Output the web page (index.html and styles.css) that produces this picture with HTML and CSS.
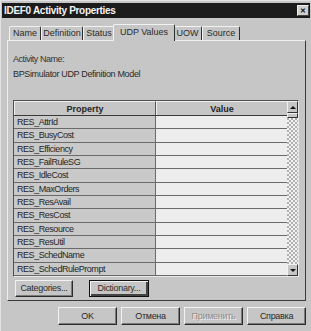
FILE: index.html
```html
<!DOCTYPE html>
<html>
<head>
<meta charset="utf-8">
<link rel="stylesheet" href="styles.css">
</head>
<body>
<div class="dialog">
  <div class="titlebar">
    <span class="title">IDEF0 Activity Properties</span>
    <span class="close">✕</span>
  </div>
  <div class="tabs">
    <div class="tab t-name">Name</div>
    <div class="tab t-def">Definition</div>
    <div class="tab t-status">Status</div>
    <div class="tab t-udp active">UDP Values</div>
    <div class="tab t-uow">UOW</div>
    <div class="tab t-src">Source</div>
  </div>
  <div class="panel">
    <div class="label">Activity Name:</div>
    <div class="name">BPSimulator UDP Definition Model</div>
    <div class="grid">
      <div class="table">
        <div class="row head"><div class="cell prop">Property</div><div class="cell val">Value</div></div>
        <div class="row"><div class="cell prop">RES_AttrId</div><div class="cell val"></div></div>
        <div class="row"><div class="cell prop">RES_BusyCost</div><div class="cell val"></div></div>
        <div class="row"><div class="cell prop">RES_Efficiency</div><div class="cell val"></div></div>
        <div class="row"><div class="cell prop">RES_FailRuleSG</div><div class="cell val"></div></div>
        <div class="row"><div class="cell prop">RES_IdleCost</div><div class="cell val"></div></div>
        <div class="row"><div class="cell prop">RES_MaxOrders</div><div class="cell val"></div></div>
        <div class="row"><div class="cell prop">RES_ResAvail</div><div class="cell val"></div></div>
        <div class="row"><div class="cell prop">RES_ResCost</div><div class="cell val"></div></div>
        <div class="row"><div class="cell prop">RES_Resource</div><div class="cell val"></div></div>
        <div class="row"><div class="cell prop">RES_ResUtil</div><div class="cell val"></div></div>
        <div class="row"><div class="cell prop">RES_SchedName</div><div class="cell val"></div></div>
        <div class="row"><div class="cell prop">RES_SchedRulePrompt</div><div class="cell val"></div></div>
      </div>
      <div class="scroll">
        <div class="sbtn"><span class="arrow-up"></span></div>
        <div class="thumb"></div>
        <div class="track"></div>
        <div class="sbtn"><span class="arrow-down"></span></div>
      </div>
    </div>
    <div class="btnrow">
      <div class="btn b-cat">Categories...</div>
      <div class="btn b-dict focus">Dictionary...</div>
    </div>
  </div>
  <div class="footer">
    <div class="btn fbtn">OK</div>
    <div class="btn fbtn">Отмена</div>
    <div class="btn fbtn disabled">Применить</div>
    <div class="btn fbtn">Справка</div>
  </div>
</div>
</body>
</html>
```

FILE: styles.css
```css
html, body {
  margin: 0;
  padding: 0;
}
body {
  width: 311px;
  height: 331px;
  overflow: hidden;
  background: #c6c6c6;
  font-family: "Liberation Sans", Arial, sans-serif;
  font-size: 9px;
  color: #1e1e1e;
}
.dialog {
  box-sizing: border-box;
  width: 311px;
  height: 331px;
  padding: 3px 1px 0 1px;
  border-left: 1px solid #e2e2e2;
  border-top: 1px solid #e2e2e2;
}
.titlebar {
  height: 15px;
  background: #1b1b1b;
  display: flex;
  align-items: center;
  justify-content: space-between;
  padding: 0 1px 0 2px;
  margin-top: -1px;
}
.title {
  color: #f4f4f4;
  font-weight: bold;
  font-size: 10px;
  letter-spacing: -0.3px;
}
.close {
  box-sizing: border-box;
  width: 12px;
  height: 11px;
  background: #cfcfcf;
  border: 1px solid;
  border-color: #f0f0f0 #444 #444 #f0f0f0;
  color: #111;
  font-size: 7px;
  line-height: 9px;
  text-align: center;
  font-weight: bold;
}
.tabs {
  display: flex;
  align-items: flex-end;
  height: 16px;
  margin-top: 6px;
  padding-left: 7px;
}
.tab {
  box-sizing: border-box;
  height: 14px;
  border-left: 1px solid #f2f2f2;
  border-top: 1px solid #f2f2f2;
  border-right: 1px solid #2e2e2e;
  border-radius: 2px 2px 0 0;
  line-height: 13px;
  text-align: center;
  white-space: nowrap;
  color: #2a2a2a;
}
.t-name { width: 32px; }
.t-def { width: 42px; }
.t-status { width: 32px; }
.t-udp { width: 58px; }
.t-uow { width: 29px; }
.t-src { width: 38px; }
.tab.active {
  position: relative;
  z-index: 1;
  width: 62px;
  height: 17px;
  margin: 0 -2px -1px -2px;
  background: #c6c6c6;
  line-height: 15px;
}
.panel {
  box-sizing: border-box;
  width: 299px;
  height: 261px;
  margin-left: 5px;
  border: 1px solid;
  border-color: #eeeeee #3a3a3a #3a3a3a #eeeeee;
  padding: 13px 0 0 5px;
}
.label {
  line-height: 11px;
  color: #333;
  letter-spacing: -0.45px;
}
.name {
  line-height: 11px;
  margin-top: 4px;
  color: #2a2a2a;
  letter-spacing: -0.35px;
}
.grid {
  box-sizing: border-box;
  display: flex;
  width: 286px;
  height: 177px;
  margin-top: 20px;
  border: 1px solid;
  border-color: #505050 #e8e8e8 #e8e8e8 #505050;
}
.table {
  display: flex;
  flex-direction: column;
  width: 274px;
}
.row {
  display: flex;
  height: 13.4px;
  box-sizing: border-box;
  border-bottom: 1px solid #6a6a6a;
}
.row.head {
  height: 15px;
  border-bottom: 1px solid #3a3a3a;
}
.cell {
  box-sizing: border-box;
  height: 100%;
  line-height: 12px;
  white-space: nowrap;
  overflow: hidden;
}
.cell.prop {
  width: 142px;
  padding-left: 3px;
  background: #c9c9c9;
  border-right: 1px solid #6a6a6a;
  color: #252525;
  letter-spacing: -0.45px;
}
.cell.val {
  flex: 1;
  background: #ededed;
}
.head .cell {
  background: #c6c6c6;
  text-align: center;
  font-weight: bold;
  line-height: 14px;
  padding-left: 0;
  border-left: 1px solid #f0f0f0;
  border-top: 1px solid #f0f0f0;
  letter-spacing: 0;
}
.head .cell.prop {
  border-right: 1px solid #555;
}
.scroll {
  width: 11px;
  display: flex;
  flex-direction: column;
}
.sbtn {
  box-sizing: border-box;
  height: 12px;
  background: #c6c6c6;
  border: 1px solid;
  border-color: #f0f0f0 #333 #333 #f0f0f0;
  display: flex;
  align-items: center;
  justify-content: center;
}
.arrow-up {
  width: 0;
  height: 0;
  border-left: 3px solid transparent;
  border-right: 3px solid transparent;
  border-bottom: 3px solid #111;
}
.arrow-down {
  width: 0;
  height: 0;
  border-left: 3px solid transparent;
  border-right: 3px solid transparent;
  border-top: 3px solid #111;
}
.thumb {
  box-sizing: border-box;
  height: 5px;
  background: #c6c6c6;
  border: 1px solid;
  border-color: #f0f0f0 #333 #333 #f0f0f0;
}
.track {
  flex: 1;
  background: repeating-conic-gradient(#f2f2f2 0 25%, #b0b0b0 0 50%) 0 0 / 4px 4px;
}
.btnrow {
  display: flex;
  gap: 16px;
  margin-top: 3px;
  padding-left: 2px;
}
.btn {
  box-sizing: border-box;
  height: 17px;
  background: #c6c6c6;
  border: 1px solid;
  border-color: #f2f2f2 #2c2c2c #2c2c2c #f2f2f2;
  box-shadow: inset -1px -1px 0 #7c7c7c;
  line-height: 15px;
  text-align: center;
  white-space: nowrap;
  color: #2a2a2a;
  letter-spacing: -0.3px;
}
.b-cat { width: 58px; }
.b-dict { width: 60px; }
.btn.focus {
  border: 1px solid #111;
  box-shadow: inset 1px 1px 0 #f2f2f2, inset -2px -2px 0 #444;
}
.footer {
  display: flex;
  gap: 4px;
  margin-top: 6px;
  padding-left: 56px;
}
.fbtn {
  width: 59px;
  height: 18px;
  line-height: 16px;
}
.fbtn.disabled {
  color: #8c8c8c;
  text-shadow: 1px 1px 0 #f0f0f0;
}
```
